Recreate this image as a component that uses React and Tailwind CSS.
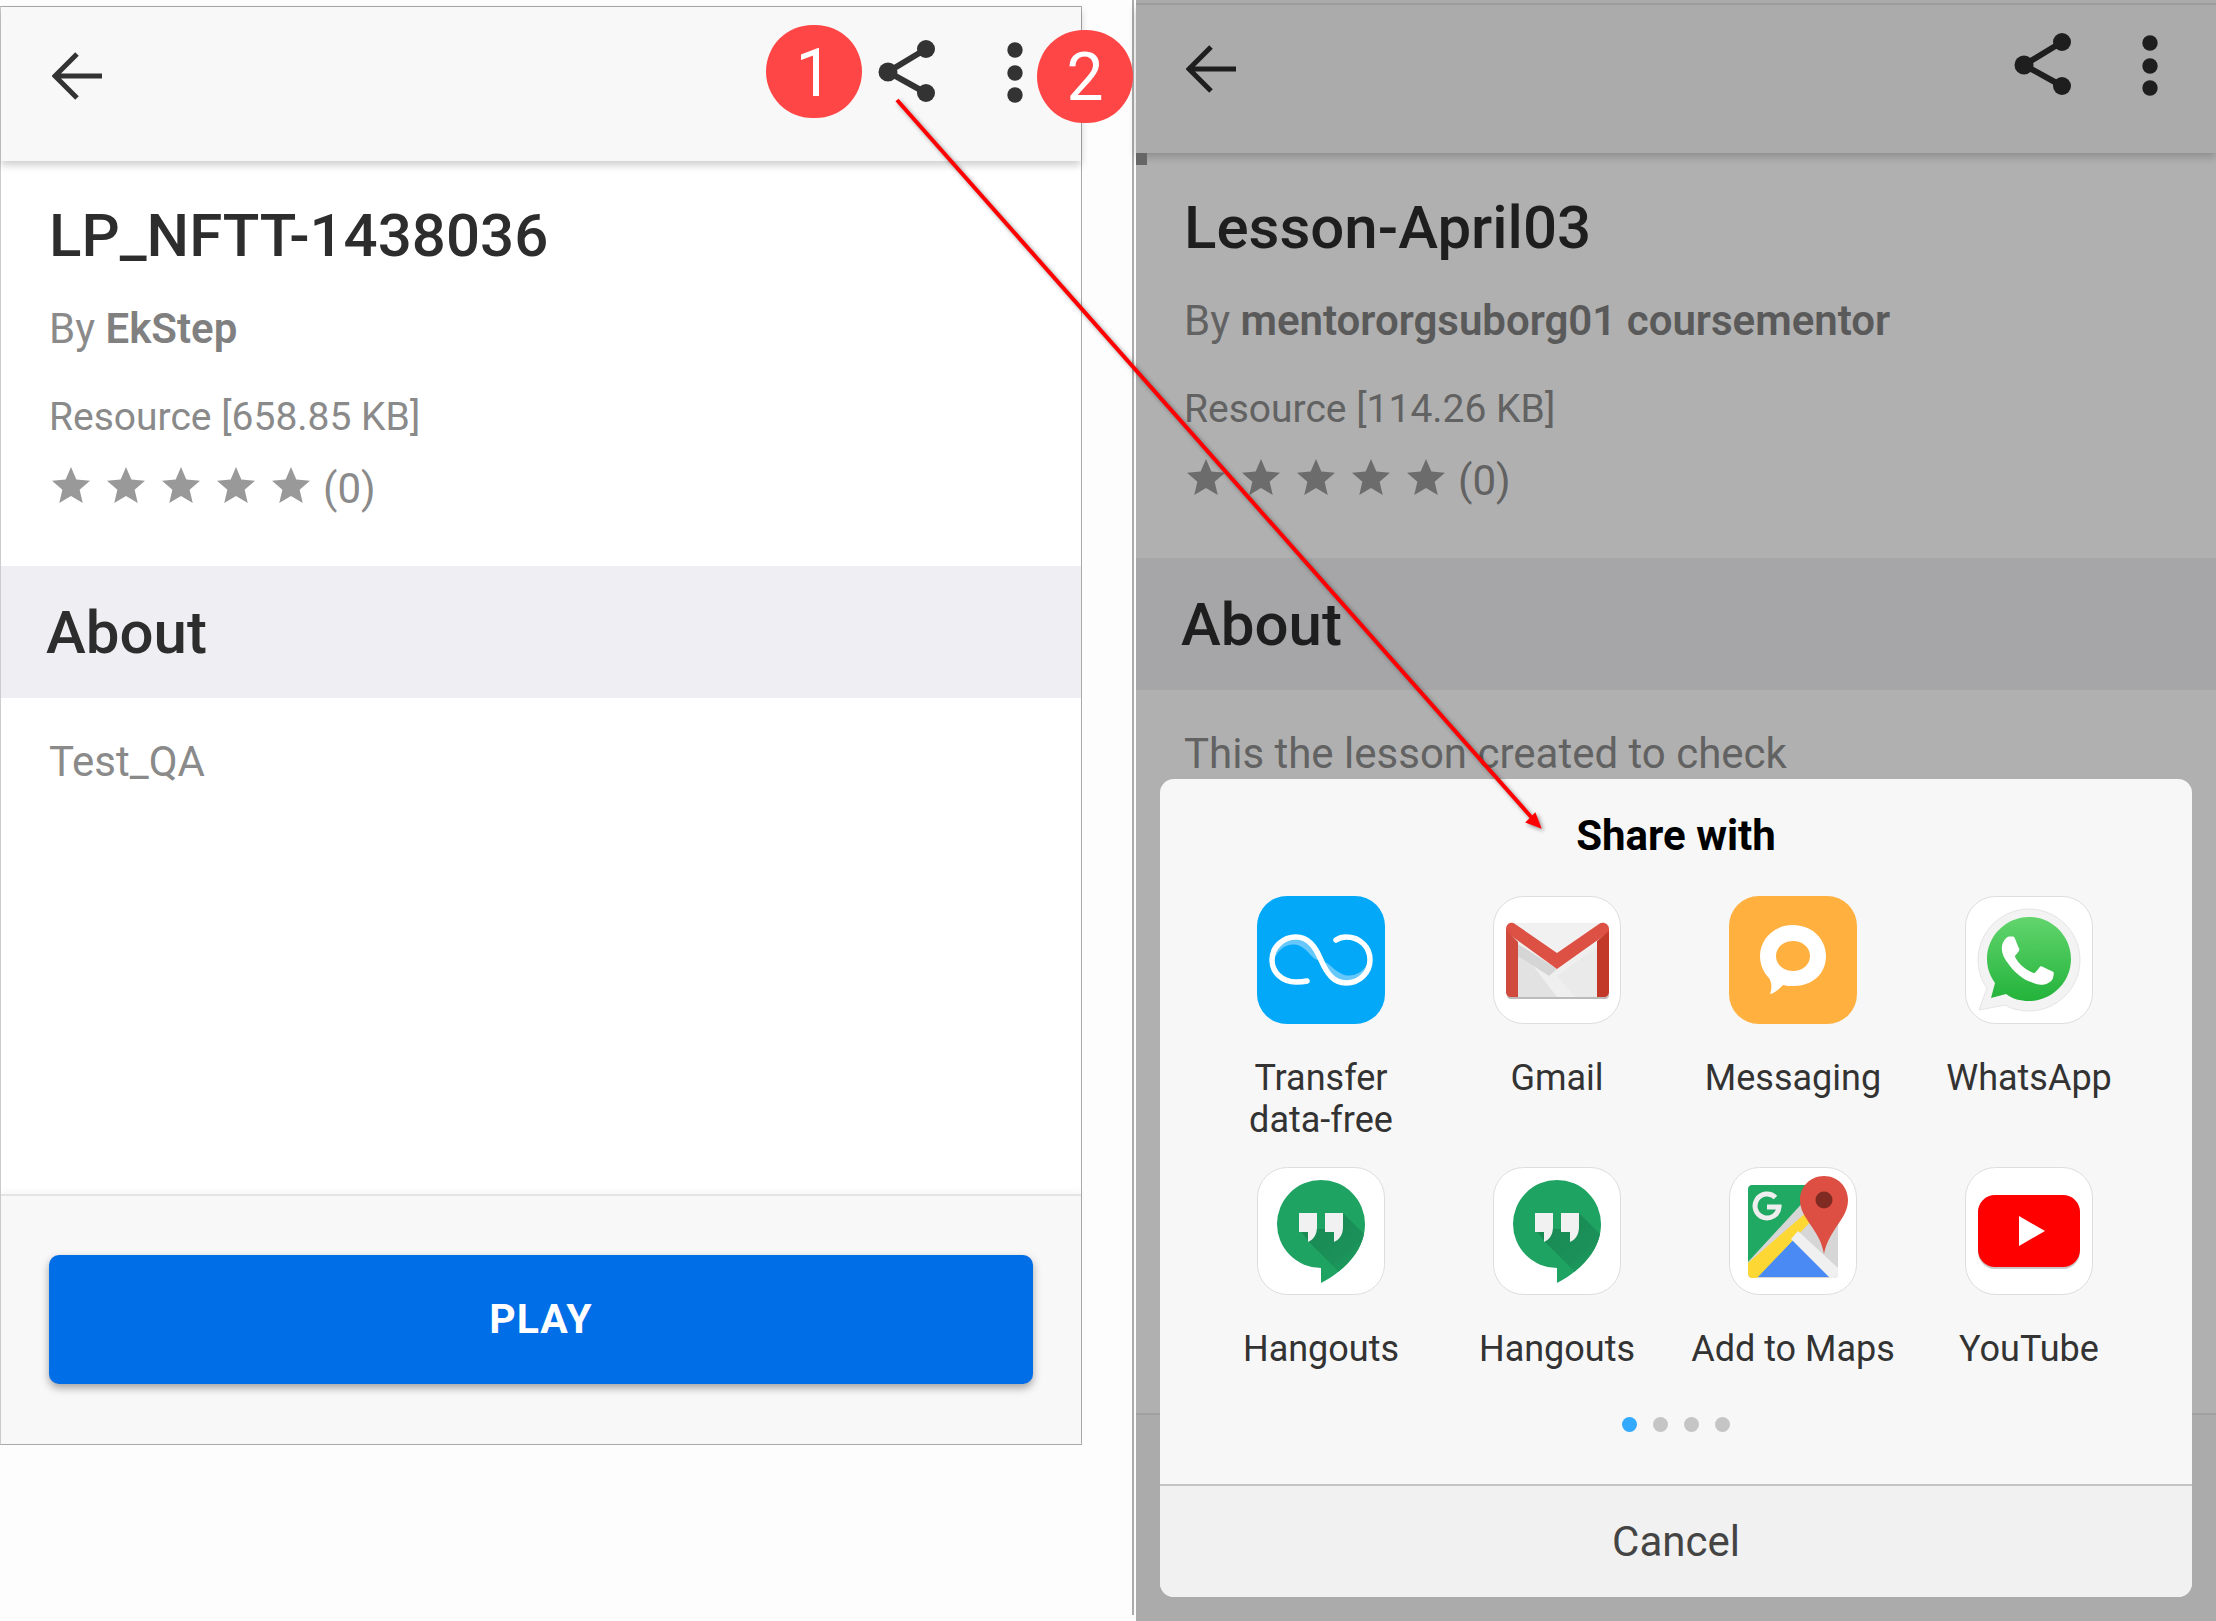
const STARS = [0, 1, 2, 3, 4];

const APPS = [
  { name: 'Transfer\ndata-free', icon: <TransferIcon /> },
  { name: 'Gmail', icon: <GmailIcon /> },
  { name: 'Messaging', icon: <MessagingIcon /> },
  { name: 'WhatsApp', icon: <WhatsAppIcon /> },
  { name: 'Hangouts', icon: <HangoutsIcon /> },
  { name: 'Hangouts', icon: <HangoutsIcon /> },
  { name: 'Add to Maps', icon: <MapsIcon /> },
  { name: 'YouTube', icon: <YouTubeIcon /> },
];

function TransferIcon() {
  return (
    <svg viewBox="0 0 128 128" className="w-full h-full">
      <rect width="128" height="128" rx="30" fill="#03a9f8" />
      <path d="M17 64 C22 50 34 46 43 50 C52 54 56 66 64 64 C58 50 52 40 39 40 C26 40 16 50 17 64Z" fill="#66c8fa" />
      <path d="M111 66 C106 78 94 82 85 78 C76 74 72 66 66 66 C70 78 76 88 89 88 C102 88 112 78 111 66Z" fill="#66c8fa" />
      <path d="M50 85 C46 86 43 86 39 86 C25 86 15 76 15 64 C15 51 26 41 39 41 C51 41 58 50 64 64 C70 78 77 87 89 87 C103 87 113 76 113 64 C113 51 103 41 89 41 C85 41 82 42 79 44" fill="none" stroke="#fff" strokeWidth="5.5" strokeLinecap="round" />
    </svg>
  );
}

function GmailIcon() {
  return (
    <svg viewBox="0 0 128 128" className="w-full h-full">
      <rect x="0.5" y="0.5" width="127" height="127" rx="30" fill="#fff" stroke="#ddd" />
      <rect x="14" y="30" width="102" height="73" rx="4" fill="#bbb" />
      <rect x="14" y="27" width="102" height="74" rx="4" fill="#efefef" />
      <path d="M25 50 L64 101 H25Z" fill="#e2e2e2" />
      <path d="M105 50 L64 80 L82 101 H105Z" fill="#eaeaea" />
      <path d="M25 46 L64 73 L105 46 V28 H25Z" fill="#f1f1f1" />
      <path d="M25 48 L64 73 L56 80 L25 60Z" fill="#d5d5d5" />
      <path d="M13 33 C13 28 18 25 22 28 L64 57 L106 28 C110 25 116 28 116 33 L116 36 L64 73 L13 36Z" fill="#dd5144" />
      <path d="M13 34 L25 46 V101 H18 C15 101 13 99 13 96Z" fill="#d04a3e" />
      <path d="M104 45 L116 35 V96 C116 99 114 101 111 101 H104Z" fill="#c23829" />
    </svg>
  );
}

function MessagingIcon() {
  return (
    <svg viewBox="0 0 128 128" className="w-full h-full">
      <rect width="128" height="128" rx="30" fill="#ffb03f" />
      <path fillRule="evenodd" d="M64 29 C83 29 97 43 97 60 C97 78 83 90 65 90 C61 90 57 90 54 89 C50 93 46 97 41 98 C43 92 43 87 40 82 C34 76 31 68 31 60 C31 43 45 29 64 29Z M64 45 C55 45 47 51 47 60 C47 69 55 75 64 75 C73 75 81 69 81 60 C81 51 73 45 64 45Z" fill="#fff" />
    </svg>
  );
}

function WhatsAppIcon() {
  return (
    <svg viewBox="0 0 128 128" className="w-full h-full">
      <defs>
        <linearGradient id="wa" x1="0" y1="0" x2="0" y2="1">
          <stop offset="0" stopColor="#62d56d" />
          <stop offset="1" stopColor="#23b33b" />
        </linearGradient>
      </defs>
      <rect x="0.5" y="0.5" width="127" height="127" rx="30" fill="#fff" stroke="#ddd" />
      <path d="M64 13 C92 13 115 36 115 64 C115 92 92 115 64 115 C55 115 47 113 40 109 L14 114 L22 92 C16 84 13 74 13 64 C13 36 36 13 64 13Z" fill="#f3f3f3" stroke="#e4e4e4" />
      <path d="M64 21 C87 21 106 40 106 63 C106 86 87 105 64 105 C55 105 48 103 41 98 L26 102 L30 87 C25 80 22 72 22 63 C22 40 41 21 64 21Z" fill="url(#wa)" />
      <path transform="translate(11 13) scale(4.3)" fill="#fff" d="M17.472 14.382c-.297-.149-1.758-.867-2.03-.967-.273-.099-.471-.148-.67.15-.197.297-.767.966-.94 1.164-.173.199-.347.223-.644.075-.297-.15-1.255-.463-2.39-1.475-.883-.788-1.48-1.761-1.653-2.059-.173-.297-.018-.458.13-.606.134-.133.298-.347.446-.52.149-.174.198-.298.298-.497.099-.198.05-.371-.025-.52-.075-.149-.669-1.612-.916-2.207-.242-.579-.487-.5-.669-.51-.173-.008-.371-.01-.57-.01-.198 0-.52.074-.792.372-.272.297-1.04 1.016-1.04 2.479 0 1.462 1.065 2.875 1.213 3.074.149.198 2.096 3.2 5.077 4.487.709.306 1.262.489 1.694.625.712.227 1.36.195 1.871.118.571-.085 1.758-.719 2.006-1.413.248-.694.248-1.289.173-1.413-.074-.124-.272-.198-.57-.347z" />
    </svg>
  );
}

function HangoutsIcon() {
  const bubble = 'M64 13 A44 44 0 0 0 64 101 V116 C85 105 108 85 108 57 A44 44 0 0 0 64 13Z';
  return (
    <svg viewBox="0 0 128 128" className="w-full h-full">
      <defs>
        <clipPath id="hangouts-bubble"><path d={bubble} /></clipPath>
        <linearGradient id="hangouts-fold" x1="0.2" y1="0.2" x2="0.85" y2="0.85">
          <stop offset="0" stopColor="#1a8a55" />
          <stop offset="0.6" stopColor="#1b9159" />
          <stop offset="1" stopColor="#1ea362" />
        </linearGradient>
      </defs>
      <rect x="0.5" y="0.5" width="127" height="127" rx="30" fill="#fff" stroke="#ddd" />
      <path d={bubble} fill="#1ea362" />
      <path clipPath="url(#hangouts-bubble)" d="M42 62 L52 75 L90 113 L120 80 L86 46 L68 46 L68 62Z" fill="url(#hangouts-fold)" />
      <path d="M42 46 H60 V60 C60 68 56 73 51 75 V65 H42Z" fill="#f1f1f1" />
      <path d="M68 46 H86 V60 C86 68 82 73 77 75 V65 H68Z" fill="#f1f1f1" />
    </svg>
  );
}

function MapsIcon() {
  return (
    <svg viewBox="0 0 128 128" className="w-full h-full">
      <rect x="0.5" y="0.5" width="127" height="127" rx="30" fill="#fff" stroke="#ddd" />
      <rect x="19" y="18" width="90" height="93" rx="4" fill="#d6d6d6" />
      <path d="M23 18 H90 L19 95 V22 C19 20 21 18 23 18Z" fill="#20a962" />
      <path d="M28 110 L64 73 L101 110Z" fill="#4a8af4" />
      <path d="M19 96 L79 44 L84 52 L28 111 H23 C21 111 19 109 19 106Z" fill="#fdd835" />
      <path d="M69 64 L109 101 V106 C109 109 107 111 104 111 H101 L62 72Z" fill="#f0f0f0" />
      <path d="M46.5 30.5 A12 12 0 1 0 50 40 H38" fill="none" stroke="#eeeeee" strokeWidth="5" />
      <path d="M95 9 C109 9 119 20 119 33 C119 52 100 62 95 87 C91 62 71 52 71 33 C71 20 81 9 95 9Z" fill="#dd4f42" />
      <circle cx="95" cy="33" r="8.5" fill="#7f2a22" />
    </svg>
  );
}

function YouTubeIcon() {
  return (
    <svg viewBox="0 0 128 128" className="w-full h-full">
      <rect x="0.5" y="0.5" width="127" height="127" rx="30" fill="#fff" stroke="#ddd" />
      <rect x="13" y="29" width="102" height="73" rx="17" fill="#c9c9c9" />
      <rect x="13" y="28" width="102" height="72" rx="17" fill="#ff0000" />
      <path d="M54 49 V79 L80 64Z" fill="#fff" />
    </svg>
  );
}

function BackIcon({ color }) {
  return (
    <svg viewBox="0 0 50 48" className="w-[50px] h-[48px] mt-[12px]">
      <path d="M50 24 H4 M25 2 L3 24 L25 46" fill="none" stroke={color} strokeWidth="5" />
    </svg>
  );
}

function ShareIcon({ color }) {
  return (
    <svg viewBox="0 0 58 62" className="w-[58px] h-[62px]">
      <path d="M48 9 L10 32 L48 53" fill="none" stroke={color} strokeWidth="6" />
      <circle cx="48" cy="9" r="9" fill={color} />
      <circle cx="10" cy="32" r="9.5" fill={color} />
      <circle cx="48" cy="53" r="9" fill={color} />
    </svg>
  );
}

function MoreIcon({ color }) {
  return (
    <svg viewBox="0 0 16 62" className="w-[16px] h-[62px] mt-[2px]">
      <circle cx="8" cy="8" r="7.7" fill={color} />
      <circle cx="8" cy="31" r="7.7" fill={color} />
      <circle cx="8" cy="53" r="7.7" fill={color} />
    </svg>
  );
}

function Star({ color }) {
  return (
    <svg viewBox="2 2 20 19" preserveAspectRatio="none" className="w-[38px] h-[36px]">
      <path d="M12 17.27L18.18 21l-1.64-7.03L22 9.24l-7.19-.61L12 2 9.19 8.63 2 9.24l5.46 4.73L5.82 21z" fill={color} />
    </svg>
  );
}

function PhoneHeader({ color, className, shareGap }) {
  return (
    <div className={`flex items-start shrink-0 shadow-[0_4px_8px_rgba(0,0,0,0.2)] ${className}`}>
      <BackIcon color={color} />
      <div className="flex-1" />
      <ShareIcon color={color} />
      <div className={shareGap} />
      <MoreIcon color={color} />
    </div>
  );
}

function Details({ title, author, size, about, dim }) {
  const titleColor = dim ? 'text-[#1e1e1e]' : 'text-[#2d2d2d]';
  const mutedColor = dim ? 'text-[#626262]' : 'text-[#8a8a8a]';
  const boldColor = dim ? 'text-[#5a5a5a]' : 'text-[#808080]';
  const bandColor = dim ? 'bg-[#a6a6a8]' : 'bg-[#eeeef3]';
  return (
    <div className="flex-1 flex flex-col">
      <div className="pl-[48px] pt-[40px] h-[405px] shrink-0">
        <h1 className={`text-[60px] leading-[70px] font-medium ${titleColor}`}>{title}</h1>
        <p className={`text-[42px] leading-[48px] mt-[34px] ${mutedColor}`}>
          By <span className={`font-semibold ${boldColor}`}>{author}</span>
        </p>
        <p className={`text-[39px] leading-[48px] mt-[40px] ${mutedColor}`}>Resource [{size}]</p>
        <div className="flex items-start mt-[15px]">
          <div className="flex gap-[17px] pl-[3px] pt-[11px]">
            {STARS.map((s) => <Star key={s} color={dim ? '#6c6c6c' : '#999999'} />)}
          </div>
          <span className={`text-[42px] leading-[56px] ml-[13px] pt-[5px] ${mutedColor}`}>(0)</span>
        </div>
      </div>
      <div className={`h-[132px] flex items-center pl-[45px] pt-[2px] shrink-0 ${bandColor}`}>
        <h2 className={`text-[60px] font-medium ${titleColor}`}>About</h2>
      </div>
      <p className={`pl-[48px] pt-[38px] text-[42px] leading-[52px] ${mutedColor}`}>{about}</p>
    </div>
  );
}

function ShareSheet() {
  return (
    <div className="absolute left-[24px] bottom-[24px] w-[1032px] h-[818px] rounded-[14px] overflow-hidden bg-[#f7f7f7] flex flex-col">
      <div className="h-[117px] shrink-0 flex items-end justify-center pb-[35px]">
        <span className="text-[42px] leading-[50px] font-bold text-black">Share with</span>
      </div>
      <div className="grid grid-cols-4 w-[944px] ml-[43px] auto-rows-[271px]">
        {APPS.map((app, i) => (
          <div key={i} className="flex flex-col items-center">
            <div className="w-[128px] h-[128px] shrink-0">{app.icon}</div>
            <span className="mt-[33px] w-[230px] text-center text-[36px] leading-[42px] text-[#333333] whitespace-pre-line">{app.name}</span>
          </div>
        ))}
      </div>
      <div className="flex justify-center gap-[16px] -mt-[21px]">
        <div className="w-[15px] h-[15px] rounded-full bg-[#33aaff]" />
        <div className="w-[15px] h-[15px] rounded-full bg-[#c5c5c5]" />
        <div className="w-[15px] h-[15px] rounded-full bg-[#c5c5c5]" />
        <div className="w-[15px] h-[15px] rounded-full bg-[#c5c5c5]" />
      </div>
      <div className="flex-1" />
      <div className="h-[113px] shrink-0 border-t-2 border-[#c4c4c4] bg-[#f1f1f1] flex items-center justify-center">
        <span className="text-[42px] text-[#444444]">Cancel</span>
      </div>
    </div>
  );
}

function Annotations() {
  return (
    <div className="absolute inset-0 pointer-events-none">
      <svg viewBox="0 0 2216 1621" className="absolute inset-0 w-full h-full drop-shadow-[2px_2px_2px_rgba(0,0,0,0.4)]">
        <line x1="897" y1="100" x2="1532" y2="818" stroke="#ff0000" strokeWidth="4" />
        <path d="M1540 827 L1527 822 L1535 814Z" fill="#ff0000" stroke="#ff0000" strokeWidth="2" />
      </svg>
      <div className="absolute left-[766px] top-[25px] w-[96px] h-[93px] pt-[4px] rounded-full bg-[#ff4646] flex items-center justify-center text-white text-[66px]">1</div>
      <div className="absolute left-[1037px] top-[30px] w-[96px] h-[93px] pt-[2px] rounded-full bg-[#ff4646] flex items-center justify-center text-white text-[66px]">2</div>
    </div>
  );
}

export default function App() {
  return (
    <div className="relative w-[2216px] h-[1621px] overflow-hidden bg-[#fdfdfd] flex items-start font-['Roboto',sans-serif]">
      {/* left phone */}
      <div className="w-[1082px] h-[1439px] mt-[6px] shrink-0 flex flex-col bg-white border border-[#aaaaaa] border-l-[#cccccc]">
        <PhoneHeader color="#333333" className="h-[154px] bg-[#f8f8f8] pl-[51px] pr-[58px] pt-[33px]" shareGap="w-[71px]" />
        <Details title="LP_NFTT-1438036" author="EkStep" size="658.85 KB" about="Test_QA" />
        <div className="h-[250px] shrink-0 bg-[#f8f8f8] border-t-2 border-[#e4e4e4] shadow-[0_-4px_6px_rgba(0,0,0,0.03)] px-[48px] pt-[59px]">
          <button className="w-full h-[129px] rounded-[10px] bg-[#006ee6] text-white text-[41px] font-bold tracking-[1px] shadow-[0_4px_8px_rgba(0,0,0,0.35)]">PLAY</button>
        </div>
      </div>

      {/* right phone */}
      <div className="w-[2px] h-[1615px] ml-[50px] shrink-0 bg-[#aaaaaa]" />
      <div className="relative w-[1080px] h-[1621px] ml-[2px] shrink-0 flex flex-col bg-[#b0b0b0]">
        <div className="h-[5px] shrink-0 border-b-2 border-[#a0a0a0] bg-[#ababab]" />
        <PhoneHeader color="#1e1e1e" className="h-[148px] bg-[#ababab] pl-[50px] pr-[58px] pt-[28px]" shareGap="w-[70px]" />
        <Details title="Lesson-April03" author="mentororgsuborg01 coursementor" size="114.26 KB" about="This the lesson created to check" dim />
        <div className="h-[208px] shrink-0 bg-[#ababab] border-t-2 border-[#a0a0a0]" />
        <div className="absolute left-0 top-[153px] w-[11px] h-[12px] bg-[#666666]" />
        <ShareSheet />
      </div>

      <Annotations />
    </div>
  );
}
